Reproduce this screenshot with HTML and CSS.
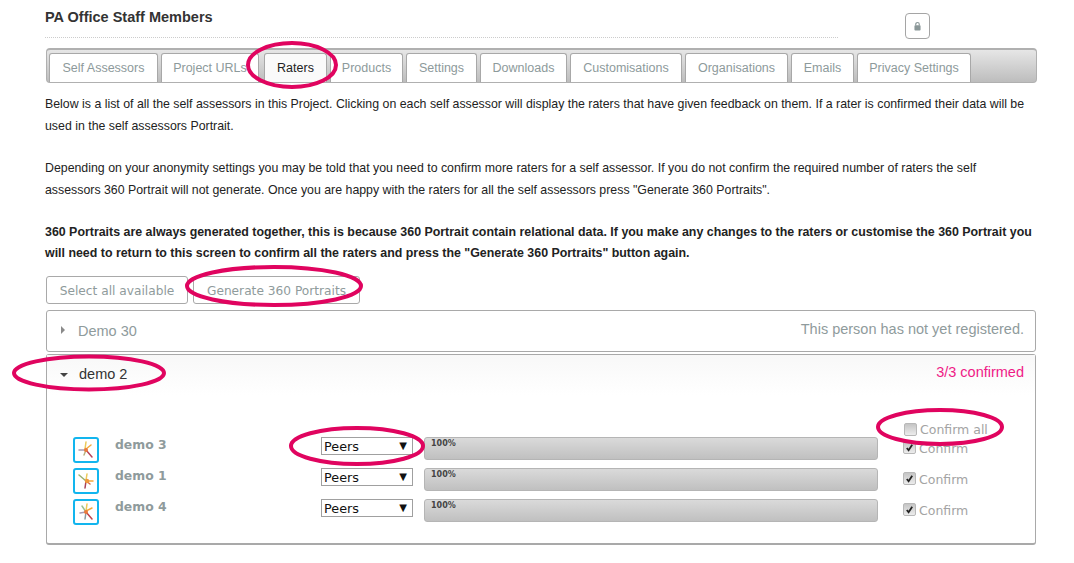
FILE: index.html
```html
<!DOCTYPE html>
<html lang="en">
<head>
<meta charset="utf-8">
<title>PA Office Staff Members</title>
<link rel="stylesheet" href="styles.css">
</head>
<body>
<main class="page">
  <header class="head">
    <h1 class="title">PA Office Staff Members</h1>
    <button class="lock" aria-label="Lock">
      <svg width="7" height="10" viewBox="0 0 8 10"><path d="M2 4.500V3a2 2 0 0 1 4 0v1.500" fill="none" stroke="#8a9798" stroke-width="1.300"/><rect x="0.500" y="4" width="7" height="6" rx="1" fill="#8a9798"/></svg>
    </button>
  </header>
  <nav class="tabs">
    <a class="tab t1">Self Assessors</a>
    <a class="tab t2">Project URLs</a>
    <a class="tab t3 active">Raters</a>
    <a class="tab t4">Products</a>
    <a class="tab t5">Settings</a>
    <a class="tab t6">Downloads</a>
    <a class="tab t7">Customisations</a>
    <a class="tab t8">Organisations</a>
    <a class="tab t9">Emails</a>
    <a class="tab t10">Privacy Settings</a>
  </nav>
  <section class="copy">
    <p>Below is a list of all the self assessors in this Project. Clicking on each self assessor will display the raters that have given feedback on them. If a rater is confirmed their data will be used in the self assessors Portrait.</p>
    <p>Depending on your anonymity settings you may be told that you need to confirm more raters for a self assessor. If you do not confirm the required number of raters the self assessors 360 Portrait will not generate. Once you are happy with the raters for all the self assessors press "Generate 360 Portraits".</p>
    <p class="strong">360 Portraits are always generated together, this is because 360 Portrait contain relational data. If you make any changes to the raters or customise the 360 Portrait you will need to return to this screen to confirm all the raters and press the "Generate 360 Portraits" button again.</p>
  </section>
  <div class="actions">
    <button class="btn b1">Select all available</button>
    <button class="btn b2">Generate 360 Portraits</button>
  </div>
  <section class="panel closed">
    <div class="panel-head">
      <span class="caret-right"></span>
      <span class="name muted">Demo 30</span>
      <span class="status muted">This person has not yet registered.</span>
    </div>
  </section>
  <section class="panel open">
    <div class="panel-head grad">
      <span class="caret-down"></span>
      <span class="name">demo 2</span>
      <span class="status pink">3/3 confirmed</span>
    </div>
    <div class="panel-body">
      <div class="confirm-all">
        <span class="check"></span><span class="conf-label">Confirm all</span>
      </div>
      <div class="row">
        <span class="avatar"><svg width="20" height="20" viewBox="0 0 20 20"><g fill="none" stroke-width="1.500" stroke-linecap="round"><path d="M9 9L10 2" stroke="#eccb5a"/><path d="M10 9L15 5" stroke="#f4a83c"/><path d="M9 10L3 10" stroke="#a89ab0"/><path d="M10 10L8 15" stroke="#b8b080"/><path d="M10 10L16 17" stroke="#b8425a"/></g><circle cx="10" cy="10" r="2" fill="#ea7a3c"/></svg></span>
        <span class="rater">demo 3</span>
        <div class="select"><span>Peers</span><span class="arrow">▼</span></div>
        <div class="bar"><span class="pct">100%</span></div>
        <div class="confirm"><span class="check on"><svg width="9" height="9" viewBox="0 0 10 10"><path d="M2 5.500L4 8L8 2" fill="none" stroke="#222" stroke-width="2"/></svg></span><span class="conf-label">Confirm</span></div>
      </div>
      <div class="row">
        <span class="avatar"><svg width="20" height="20" viewBox="0 0 20 20"><g fill="none" stroke-width="1.500" stroke-linecap="round"><path d="M10 10L3 4" stroke="#9ab070"/><path d="M10 9L11 3" stroke="#eccb5a"/><path d="M10 10L17 10" stroke="#f4a83c"/><path d="M10 10L9 17" stroke="#a8425a"/><path d="M10 10L14 13" stroke="#d86a40"/></g><circle cx="11" cy="10" r="2.200" fill="#f0983c"/></svg></span>
        <span class="rater">demo 1</span>
        <div class="select"><span>Peers</span><span class="arrow">▼</span></div>
        <div class="bar"><span class="pct">100%</span></div>
        <div class="confirm"><span class="check on"><svg width="9" height="9" viewBox="0 0 10 10"><path d="M2 5.500L4 8L8 2" fill="none" stroke="#222" stroke-width="2"/></svg></span><span class="conf-label">Confirm</span></div>
      </div>
      <div class="row">
        <span class="avatar"><svg width="20" height="20" viewBox="0 0 20 20"><g fill="none" stroke-width="1.500" stroke-linecap="round"><path d="M10 10L6 4" stroke="#9ac090"/><path d="M10 9L11 2" stroke="#eccb5a"/><path d="M10 9L16 6" stroke="#f4a83c"/><path d="M10 10L4 11" stroke="#a89ab0"/><path d="M10 10L9 17" stroke="#8a9aa0"/><path d="M10 10L16 17" stroke="#c0404a"/></g><circle cx="10" cy="10" r="2" fill="#ea7a3c"/></svg></span>
        <span class="rater">demo 4</span>
        <div class="select"><span>Peers</span><span class="arrow">▼</span></div>
        <div class="bar"><span class="pct">100%</span></div>
        <div class="confirm"><span class="check on"><svg width="9" height="9" viewBox="0 0 10 10"><path d="M2 5.500L4 8L8 2" fill="none" stroke="#222" stroke-width="2"/></svg></span><span class="conf-label">Confirm</span></div>
      </div>
    </div>
  </section>
</main>
<svg class="marks" width="1074" height="563" viewBox="0 0 1074 563" aria-hidden="true">
  <g fill="none" stroke="#e0045f" stroke-width="4">
    <ellipse cx="292" cy="65" rx="44" ry="22"/>
    <ellipse cx="274" cy="286" rx="87" ry="19"/>
    <ellipse cx="89" cy="373" rx="75" ry="16.500"/>
    <ellipse cx="357" cy="446" rx="66" ry="18"/>
    <ellipse cx="940" cy="427" rx="62" ry="17"/>
  </g>
</svg>
</body>
</html>
```
FILE: styles.css
```css
* { box-sizing: border-box; }
html, body { margin: 0; height: 563px; overflow: hidden; background: #fff; }
body { font-family: "Liberation Sans", Arial, sans-serif; color: #222; }
.page { width: 992px; margin-left: 45px; }
.head { display: flex; align-items: flex-start; height: 48px; }
.title {
  width: 793px; height: 38px; margin: 0; padding: 8px 0 0 0;
  font-size: 14.500px; line-height: 18px; font-weight: bold; color: #333;
  border-bottom: 1px dotted #ccc;
}
.lock {
  display: flex; align-items: center; justify-content: center;
  width: 25px; height: 26px; margin: 13px 0 0 67px; padding: 0;
  background: #fff; border: 1px solid #a5a5a5; border-radius: 4px;
}
.tabs {
  display: flex; align-items: flex-end; height: 35px; margin-left: 1px; width: 991px;
  padding: 4px 0 0 2px;
  background: linear-gradient(#e6e6e6, #bdbdbd);
  border: 1px solid #b0b0b0; border-width: 2px 1px 1px; border-radius: 4px;
}
.tab {
  display: block; height: 29px; text-align: center;
  font-size: 12.500px; line-height: 29px; color: #8d9a9b; background: #fff;
  border: 1px solid #a8a8a8; border-bottom: 0; border-radius: 3px 3px 0 0;
  margin-right: 3px;
}
.tab.active { color: #222; background: #fafafa; }
.t1 { width: 109px; } .t2 { width: 98px; } .t3 { width: 63px; margin-left: 2px; margin-right: 3px; }
.t4 { width: 73px; } .t5 { width: 71px; } .t6 { width: 87px; } .t7 { width: 112px; }
.t8 { width: 103px; } .t9 { width: 63px; } .t10 { width: 114px; margin-right: 0; }
.copy { width: 992px; margin-top: 10px; font-size: 12.350px; line-height: 22px; color: #222; }
.copy p { margin: 0 0 20px 0; width: 990px; }
.copy p.strong { font-size: 12.400px; line-height: 21px; font-weight: bold; margin: 21px 0 0; }
.actions { display: flex; gap: 5px; margin: 12px 0 0 1px; }
.btn {
  height: 28px; padding: 1px 0 0; background: #fff; color: #8f9b9c;
  font-family: "DejaVu Sans", Verdana, sans-serif; font-size: 12.200px;
  border: 1px solid #a9a9a9; border-radius: 3px;
}
.b1 { width: 142px; } .b2 { width: 167px; }
.panel { width: 990px; margin-left: 1px; border: 1px solid #a9a9a9; border-radius: 3px; background: #fff; }
.closed { height: 42px; margin-top: 6px; }
.open { height: 191px; margin-top: 2px; border-bottom-width: 2px; }
.panel-head { display: flex; align-items: center; padding: 0 11px 0 14px; height: 38px; }
.grad { height: 40px; background: linear-gradient(#f8f8f8, #fff); }
.caret-right { width: 0; height: 0; border-left: 4px solid #8a8a8a; border-top: 4px solid transparent; border-bottom: 4px solid transparent; }
.caret-down { width: 0; height: 0; margin-left: -1px; margin-bottom: 1px; border-top: 4px solid #444; border-left: 4px solid transparent; border-right: 4px solid transparent; }
.name { margin-left: 13px; margin-top: 2px; font-size: 14.500px; color: #333; flex: 1; }
.open .name { margin: 0 0 2px 11px; }
.muted { color: #8f9b9c; }
.closed .name { color: #8f9b9c; }
.closed .status { margin-bottom: 2px; }
.status { font-size: 14.500px; }
.pink { color: #ef1a87; margin-bottom: 7px; }
.panel-body { padding: 26px 0 0 26px; }
.confirm-all { display: flex; align-items: center; height: 16px; margin-left: 831px; }
.row { display: flex; align-items: flex-start; height: 31px; }
.avatar {
  display: flex; align-items: center; justify-content: center;
  width: 26px; height: 26px; background: #fff; border: 2px solid #12b5ee; border-radius: 3px;
}
.rater {
  width: 206px; margin-left: 16px; padding-top: 1px;
  font-family: "DejaVu Sans", Verdana, sans-serif; font-size: 12.400px; line-height: 14px;
  font-weight: bold; color: #8f9b9c;
}
.select {
  display: flex; align-items: center; justify-content: space-between;
  width: 92px; height: 18px; padding: 0 5px 0 2px;
  font-family: "DejaVu Sans", Verdana, sans-serif; font-size: 12.800px; color: #111;
  background: #fff; border: 1px solid #a0a0a0;
}
.arrow { font-size: 10px; color: #111; margin-top: -2px; }
.bar {
  width: 454px; height: 23px; margin-left: 11px; padding: 1px 0 0 6px;
  background: linear-gradient(#dadada, #c0c0c0);
  border: 1px solid #b5b5b5; border-radius: 3px;
}
.pct { display: block; font-family: "DejaVu Sans", Verdana, sans-serif; font-size: 8px; line-height: 9px; font-weight: bold; color: #444; }
.confirm { display: flex; align-items: flex-start; margin-left: 25px; margin-top: 4px; }
.check {
  display: flex; align-items: center; justify-content: center;
  width: 13px; height: 13px; flex: none;
  background: linear-gradient(#c4c4c4, #ececec);
  border: 1px solid #b8b8b8; border-radius: 2px;
}
.conf-label {
  margin-left: 3px; font-family: "DejaVu Sans", Verdana, sans-serif; font-size: 12.500px; line-height: 15px; color: #a3a3a3;
}
.marks { position: absolute; left: 0; top: 0; pointer-events: none; }
```
